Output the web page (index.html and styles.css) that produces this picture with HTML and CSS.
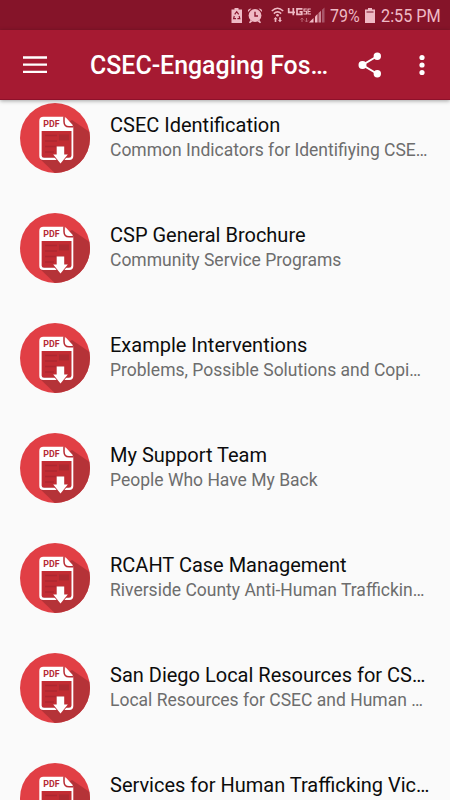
FILE: index.html
```html
<!DOCTYPE html>
<html lang="en">
<head>
<meta charset="utf-8">
<title>CSEC-Engaging Foster Youth</title>
<link rel="stylesheet" href="styles.css">
</head>
<body>
<svg class="defs" width="0" height="0" aria-hidden="true">
  <defs>
    <clipPath id="disc"><circle cx="35" cy="35" r="35"/></clipPath>
    <symbol id="pdf" viewBox="0 0 70 70">
      <circle cx="35" cy="35" r="35" fill="#e13f45"/>
      <path clip-path="url(#disc)" d="M52 17L74 32V74H39L20 56L30 30Z" fill="#b53338"/>
      <path d="M22 27H51.500V54H22Z" fill="#c22c33"/>
      <path d="M25 32.500h12M25 38h12M25 43.500h12M25 49h9" stroke="#ad2730" stroke-width="1.300"/>
      <path d="M39 31.500H49V37.500H39Z" fill="#ad2a31"/>
      <path d="M23.500 13.700H44.300L53.300 23.300V53Q53.300 57 49.300 57H23.300Q19.300 57 19.300 53V17.900Q19.300 13.700 23.500 13.700ZM21.600 28V52.500Q21.600 54.800 24 54.800H49Q51.500 54.800 51.500 52.500V28Z" fill="#fff" fill-rule="evenodd"/>
      <path d="M44 13.500V18.500Q44 23.800 49 23.800H53.500" fill="none" stroke="#b92d35" stroke-width="1.500"/>
      <path d="M45.300 14L53 22.300H49.500Q45.300 22.300 45.300 18Z" fill="#fff"/>
      <path d="M36.700 43.500H44.200V51.500H47.800L40.500 60.500L33.200 51.500H36.700Z" fill="#fff" stroke="#bd3037" stroke-width="1.600" paint-order="stroke"/>
      <text x="23.200" y="24.200" class="pdf-label" textLength="16.300" lengthAdjust="spacingAndGlyphs">PDF</text>
    </symbol>
  </defs>
</svg>
<div class="screen">
  <div class="status">
    <svg class="indicators" width="106" height="30" viewBox="0 0 106 30">
      <g fill="#efbac5">
        <path d="M4.500 8H8.500V9.500H12V23H1.500V9.500H4.500Z"/>
        <circle cx="25" cy="15.500" r="6.400"/>
        <path d="M18 12Q17.500 8.500 21.500 8.500ZM32 12Q32.500 8.500 28.500 8.500ZM20.500 20l-1.500 2.500 1 .8 2.500-2ZM29.500 20l1.500 2.500-1 .8-2.500-2Z"/>
        <circle cx="47.500" cy="15.300" r="1.300"/>
        <path d="M45.500 17l2 2.300h-1.200V22h-1.600v-2.700h-1.200ZM50 22.300L48 20h1.200v-2.700h1.600V20H52Z"/>
      </g>
      <g fill="none" stroke="#efbac5">
        <path d="M41.800 11Q47.500 5.500 53.200 11M43.800 13.600Q47.500 10.200 51.200 13.600" stroke-width="1.500"/>
        <path d="M58.700 8v4.300H65M63.300 8v7.300" stroke-width="1.700"/>
        <path d="M72.500 8.900H67V14.400H71.800V11.800H69.500" stroke-width="1.700"/>
        <path d="M76.800 9H74V11.300H76.500V14H73.500M80.800 9H78V14H81M78 11.500H80.500" stroke-width="1.100"/>
      </g>
      <path d="M4.700 14.300L6.700 11.700L8.700 14.300M4.300 16L3.600 18.700H6M9.100 16L9.800 18.700H7.400" fill="none" stroke="#8a1730" stroke-width="1.200"/>
      <path d="M25 11.800V16H28" fill="none" stroke="#8a1730" stroke-width="1.400"/>
      <path d="M75 22V18M73.500 19.500l1.500-1.500 1.500 1.500M79.500 18v4M78 20.500l1.500 1.500 1.500-1.500" transform="translate(-3)" fill="none" stroke="#b96475"/>
      <path d="M79 22.500L83.500 18V22.500Z" fill="#efbac5"/>
      <path d="M85 22.500V16.500L87.500 14V22.500Z" fill="#efbac5"/>
      <path d="M88.500 22.500V13L91 10.800V22.500Z" fill="#cb8795"/>
      <path d="M92 22.500V9.800L94.500 7.500V22.500Z" fill="#a9566a"/>
    </svg>
    <span class="percent">79%</span>
    <svg class="battery" width="10" height="15" viewBox="0 0 10 15">
      <path d="M3 0h4v1.500h3V15H0V1.500h3Z" fill="#efbac5"/><path d="M1.500 4h7" stroke="#9c4256" stroke-width="1.400"/>
    </svg>
    <span class="clock">2:55 PM</span>
  </div>
  <header class="bar">
    <svg class="menu" width="24" height="18" viewBox="0 0 24 18"><path d="M0 1.500H24M0 8.700H24M0 15.900H24" stroke="#fff" stroke-width="2.300"/></svg>
    <h1>CSEC-Engaging Fos…</h1>
    <svg class="share" width="24" height="26" viewBox="0 0 24 26"><g fill="#fff" stroke="#fff" stroke-width="2"><path d="M19.500 4L4.500 13L19.500 22" fill="none"/><circle cx="4.500" cy="13" r="3"/><circle cx="19.300" cy="4.300" r="2.700"/><circle cx="19.300" cy="21.700" r="2.700"/></g></svg>
    <svg class="more" width="6" height="22" viewBox="0 0 6 22"><g fill="#fff"><circle cx="3" cy="3.500" r="2.600"/><circle cx="3" cy="11" r="2.600"/><circle cx="3" cy="18.500" r="2.600"/></g></svg>
  </header>
  <main class="list">
    <article class="row"><svg class="icon"><use href="#pdf"/></svg><div class="text"><h2>CSEC Identification</h2><p>Common Indicators for Identifiying CSE…</p></div></article>
    <article class="row"><svg class="icon"><use href="#pdf"/></svg><div class="text"><h2>CSP General Brochure</h2><p>Community Service Programs</p></div></article>
    <article class="row"><svg class="icon"><use href="#pdf"/></svg><div class="text"><h2>Example Interventions</h2><p>Problems, Possible Solutions and Copi…</p></div></article>
    <article class="row"><svg class="icon"><use href="#pdf"/></svg><div class="text"><h2>My Support Team</h2><p>People Who Have My Back</p></div></article>
    <article class="row"><svg class="icon"><use href="#pdf"/></svg><div class="text"><h2>RCAHT Case Management</h2><p>Riverside County Anti-Human Traffickin…</p></div></article>
    <article class="row"><svg class="icon"><use href="#pdf"/></svg><div class="text"><h2>San Diego Local Resources for CS…</h2><p>Local Resources for CSEC and Human …</p></div></article>
    <article class="row"><svg class="icon"><use href="#pdf"/></svg><div class="text"><h2>Services for Human Trafficking Vic…</h2></div></article>
  </main>
</div>
</body>
</html>
```

FILE: styles.css
```css
* { box-sizing: border-box; margin: 0; padding: 0; }
body { background: #fafafa; font-family: Roboto, sans-serif; overflow: hidden; }
svg { display: block; flex: none; }
.defs { position: absolute; }
.screen { display: flex; flex-direction: column; width: 450px; height: 800px; overflow: hidden; }
.status { display: flex; flex: none; align-items: center; height: 30px; padding-left: 230px; background: #851429; color: #efbac5; font-size: 19px; line-height: 30px; white-space: nowrap; }
.percent { width: 29px; margin-left: -6px; transform: scaleX(.84); transform-origin: left; padding-top: 2px; }
.battery { margin-left: 6px; }
.clock { margin-left: 6px; transform: scaleX(.855); transform-origin: left; padding-top: 2px; }
.bar { display: flex; flex: none; align-items: center; height: 70px; padding-left: 23px; background: #a61a32; border-bottom: 1px solid #8e102a; box-shadow: 0 1px 4px rgba(0, 0, 0, .35); z-index: 1; }
.bar h1 { width: 238px; margin-left: 43px; padding-top: 3px; color: #fff; font-size: 24.9px; font-weight: 500; line-height: 30px; white-space: nowrap; }
.share { margin-left: 30px; }
.more { margin-left: 37px; }
.list { flex: 1; overflow: hidden; padding-top: 2px; }
.row { display: flex; height: 110px; padding-left: 20px; }
.icon { width: 70px; height: 70px; margin-top: .5px; }
.text { margin-left: 20px; padding-top: 10px; white-space: nowrap; }
.text h2 { color: #0c0c0c; font-size: 20px; font-weight: 400; line-height: 26px; }
.text p { color: #6d6d6d; font-size: 17.5px; line-height: 25px; }
.pdf-label { font-family: Roboto, sans-serif; font-size: 8.6px; font-weight: 700; fill: #b52b34; }
```
